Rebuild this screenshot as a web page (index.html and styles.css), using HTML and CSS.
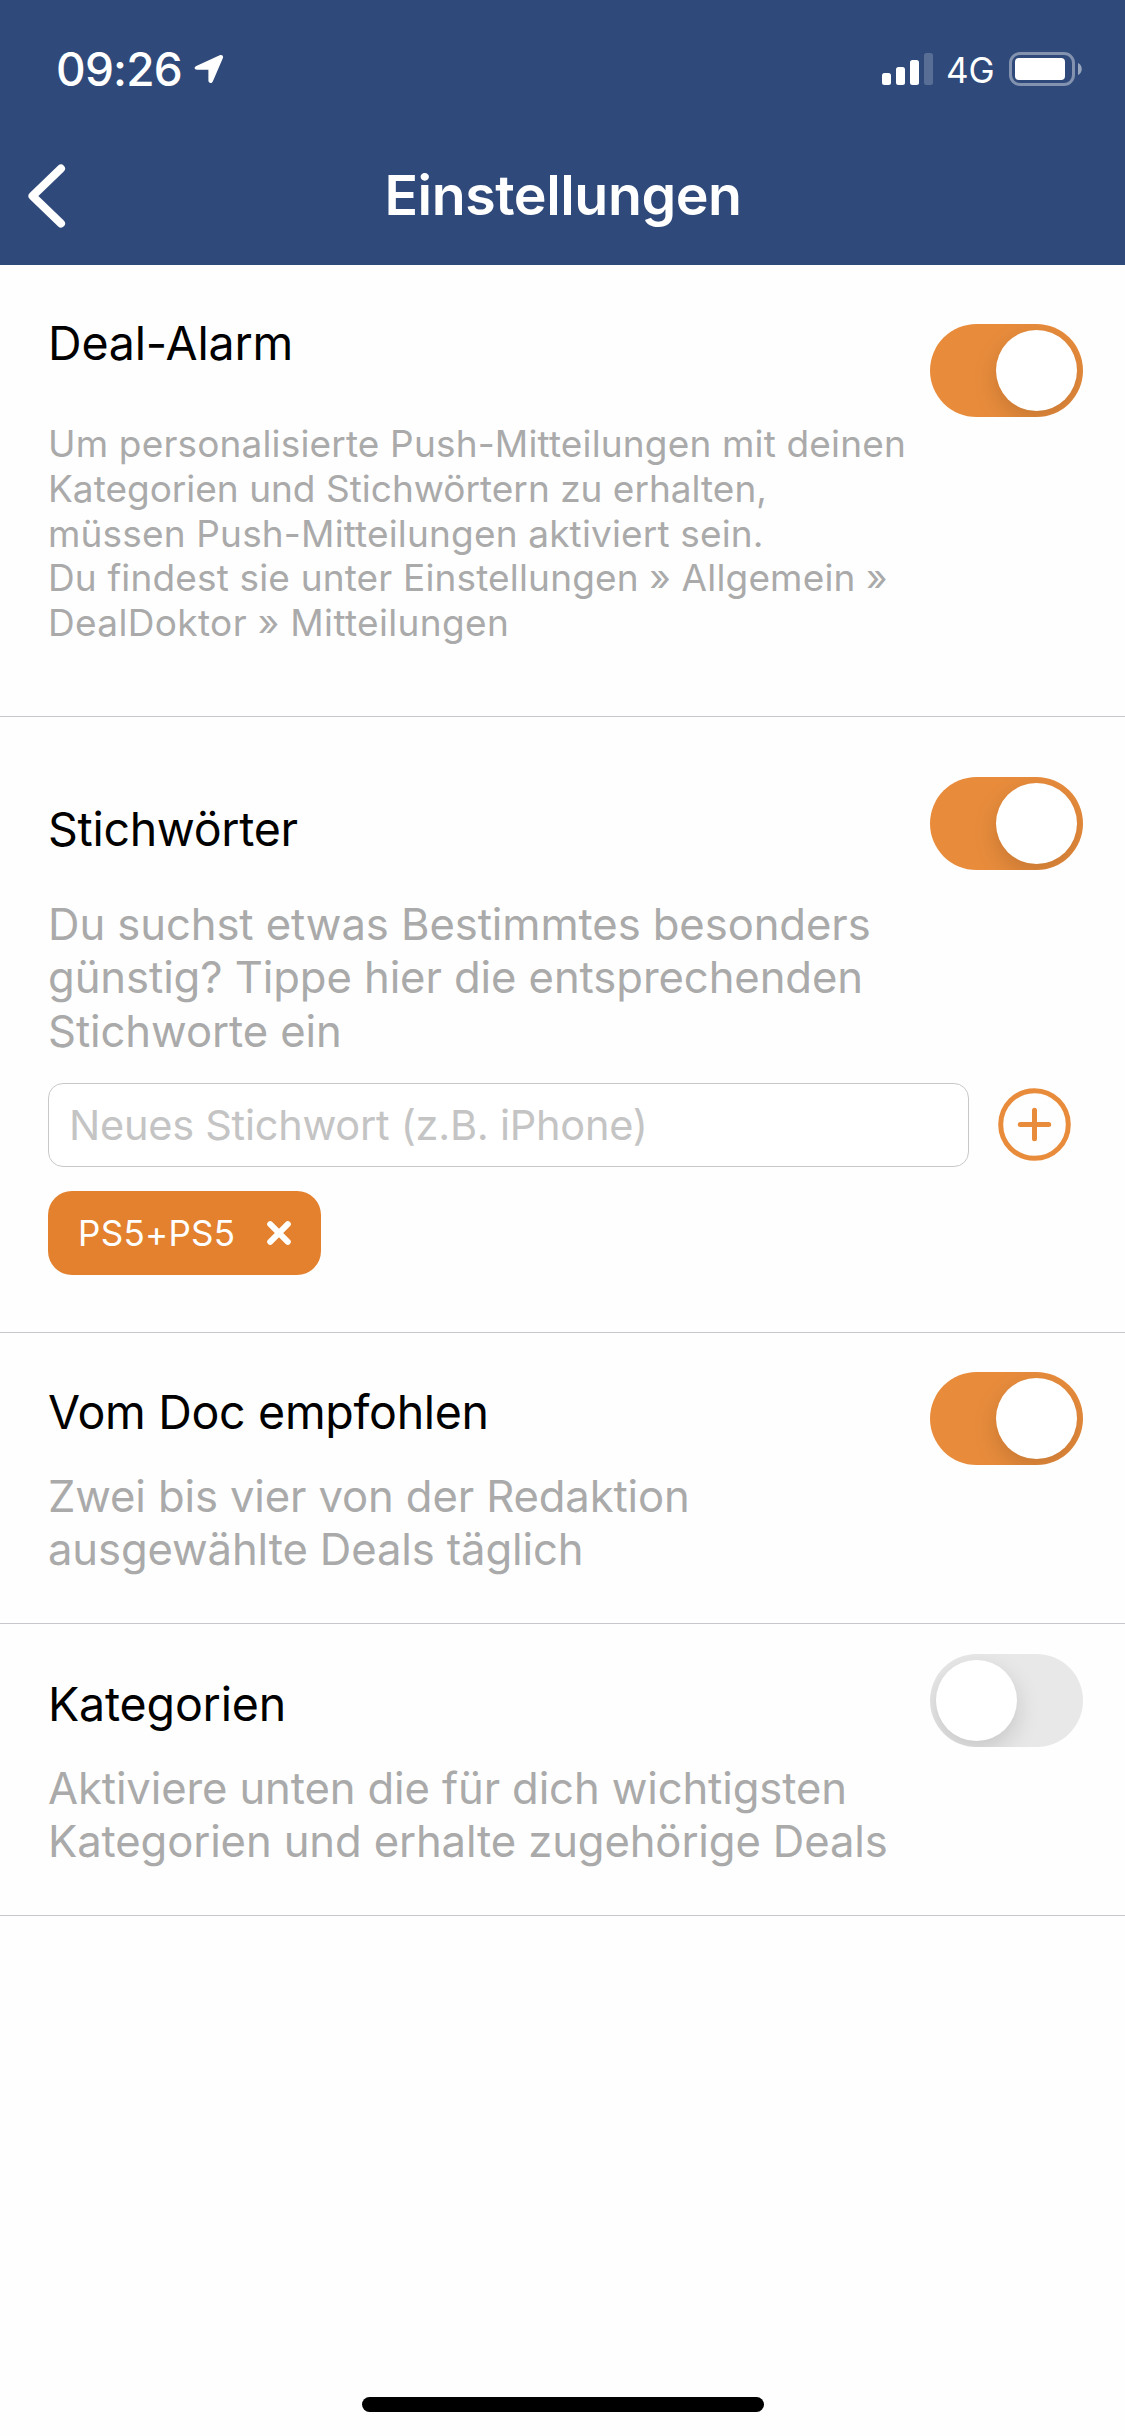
FILE: index.html
```
<!DOCTYPE html>
<html lang="de">
<head>
  <meta charset="utf-8">
  <title>Einstellungen</title>
  <link rel="stylesheet" href="styles.css">
</head>
<body>
  <header class="header">
    <div class="status">
      <span class="time">09:26</span>
      <svg class="location" viewBox="0 0 30 30" width="30" height="30"><path d="M2.300 12.100 25.700 1.200C28 0.200 29.800 2 28.800 4.300L18.900 27.200C17.800 30 14.400 29.400 14.400 26.600V15.700H3.100C0.300 15.700-0.300 13.300 2.300 12.100Z" fill="#fff"/></svg>
      <svg class="signal" viewBox="0 0 51 32" width="51" height="32" fill="#fff">
        <rect x="0" y="20" width="9" height="12" rx="2.500"/>
        <rect x="14" y="14" width="9" height="18" rx="2.500"/>
        <rect x="28" y="7" width="9" height="25" rx="2.500"/>
        <rect x="42" y="0" width="9" height="32" rx="2.500" opacity=".2"/>
      </svg>
      <span class="network">4G</span>
      <svg class="battery" viewBox="0 0 73 34" width="73" height="34">
        <rect x="1.500" y="1.500" width="63" height="31" rx="9.500" fill="none" stroke="#fff" stroke-width="3" opacity=".4"/>
        <rect x="6" y="6" width="50" height="22" rx="4" fill="#fff"/>
        <path d="M69 11c5 2 5 10 0 12z" fill="#fff" opacity=".5"/>
      </svg>
    </div>
    <div class="navbar">
      <svg class="back" viewBox="0 0 38 64" width="38" height="64"><path d="M33 4.500 4.500 32 33 59.500" fill="none" stroke="#fff" stroke-width="8" stroke-linecap="round" stroke-linejoin="round"/></svg>
      <h1 class="page-title">Einstellungen</h1>
    </div>
  </header>

  <main>
    <section class="setting setting-alarm">
      <div class="content">
        <h2 class="title">Deal-Alarm</h2>
        <p class="text text-small">Um personalisierte Push-Mitteilungen mit deinen<br><span class="tight">Kategorien und Stichwörtern zu erhalten,</span><br>müssen Push-Mitteilungen aktiviert sein.<br>Du findest sie unter Einstellungen » Allgemein »<br><span class="loose">DealDoktor » Mitteilungen</span></p>
      </div>
      <div class="toggle on"><div class="knob"></div></div>
    </section>

    <section class="setting setting-keywords">
      <div class="content">
        <h2 class="title title-keywords">Stichwörter</h2>
        <p class="text">Du suchst etwas Bestimmtes besonders<br>günstig? Tippe hier die entsprechenden<br>Stichworte ein</p>
      </div>
      <div class="toggle on"><div class="knob"></div></div>
      <div class="keyword-form">
        <input class="keyword-input" type="text" placeholder="Neues Stichwort (z.B. iPhone)">
        <svg class="add" viewBox="0 0 73 73" width="73" height="73" fill="none" stroke="#e88c3c" stroke-width="5"><circle cx="36.500" cy="36.500" r="33.800"/><path d="M36.500 22.300v28.400M22.300 36.500h28.400" stroke-linecap="round"/></svg>
      </div>
      <div class="tag">
        <span>PS5+PS5</span>
        <svg viewBox="0 0 24 24" width="24" height="24"><path d="M3.200 3.200 20.800 20.800M20.800 3.200 3.200 20.800" stroke="#fff" stroke-width="6" stroke-linecap="round"/></svg>
      </div>
    </section>

    <section class="setting setting-doc">
      <div class="content">
        <h2 class="title title-doc">Vom Doc empfohlen</h2>
        <p class="text">Zwei bis vier von der Redaktion<br>ausgewählte Deals täglich</p>
      </div>
      <div class="toggle on"><div class="knob"></div></div>
    </section>

    <section class="setting setting-categories">
      <div class="content">
        <h2 class="title">Kategorien</h2>
        <p class="text">Aktiviere unten die für dich wichtigsten<br>Kategorien und erhalte zugehörige Deals</p>
      </div>
      <div class="toggle"><div class="knob"></div></div>
    </section>
  </main>

  <footer class="footer"><div class="home-indicator"></div></footer>
</body>
</html>
```

FILE: styles.css
```
* {
  box-sizing: border-box;
}

body {
  margin: 0;
  min-height: 2436px;
  display: flex;
  flex-direction: column;
  background: #fefefe;
  font-family: Inter, "Liberation Sans", sans-serif;
  color: #000;
}

h1, h2, p {
  margin: 0;
  font-weight: 400;
}

svg {
  display: block;
  flex: none;
}

.header {
  height: 265px;
  background: #2f4a7a;
  color: #fff;
}

.status {
  height: 138px;
  padding: 0 43px 0 56px;
  display: flex;
  align-items: center;
}

.time {
  font-size: 46px;
  font-weight: 550;
  letter-spacing: -0.800px;
  width: 138px;
}

.signal {
  margin-left: auto;
}

.network {
  width: 63px;
  margin: 2px 0 0 13px;
  font-size: 35px;
  font-weight: 430;
}

.navbar {
  height: 116px;
  padding: 0 28px;
  display: grid;
  grid-template-columns: 38px 1fr 38px;
  align-items: center;
}

.page-title {
  padding: 0 0 3px 1px;
  text-align: center;
  font-size: 55.500px;
  font-weight: 600;
  letter-spacing: -0.450px;
}

.setting {
  display: grid;
  grid-template-columns: 1fr 153px;
  align-content: start;
  padding: 0 42px 0 48px;
  border-bottom: 1px solid #c8c7cc;
}

.title {
  font-size: 46.500px;
  line-height: 58px;
  letter-spacing: -0.170px;
}

.title-keywords {
  letter-spacing: -0.300px;
}

.title-doc {
  letter-spacing: -0.300px;
}

.text {
  font-size: 43.600px;
  line-height: 53.330px;
  letter-spacing: -0.120px;
  white-space: nowrap;
  color: #aaa;
}

.text-small {
  font-size: 37px;
  line-height: 44.750px;
  letter-spacing: 0.160px;
}

.tight {
  letter-spacing: 0;
}

.loose {
  letter-spacing: 0.350px;
}

.setting-alarm {
  height: 452px;
}

.setting-alarm .content {
  padding-top: 49px;
}

.setting-alarm .title {
  margin-bottom: 50px;
}

.setting-alarm .toggle {
  margin-top: 59px;
}

.setting-keywords {
  height: 616px;
}

.setting-keywords .content {
  padding-top: 83px;
}

.setting-keywords .title {
  margin-bottom: 40px;
}

.setting-keywords .text {
  letter-spacing: -0.080px;
}

.setting-keywords .toggle {
  margin-top: 60px;
}

.setting-doc {
  height: 291px;
}

.setting-doc .content {
  padding-top: 50px;
}

.setting-doc .title {
  margin-bottom: 29px;
}

.setting-doc .toggle {
  margin-top: 39px;
}

.setting-categories {
  height: 292px;
}

.setting-categories .content {
  padding-top: 51px;
}

.setting-categories .title {
  margin-bottom: 29px;
}

.setting-categories .toggle {
  margin-top: 30px;
}

.toggle {
  width: 153px;
  height: 93px;
  padding: 6px;
  display: flex;
  border-radius: 47px;
  background: #e8e8e8;
  overflow: hidden;
}

.toggle.on {
  justify-content: flex-end;
  background: #e88c3c;
}

.knob {
  width: 81px;
  height: 81px;
  border-radius: 50%;
  background: #fff;
  box-shadow: 0 9px 24px rgba(0, 0, 0, 0.15);
}

.keyword-form {
  grid-column: 1 / -1;
  margin-top: 25px;
  display: flex;
  align-items: center;
  gap: 29px;
}

.keyword-input {
  width: 921px;
  height: 84px;
  padding: 0 20px;
  border: 1px solid #c8c8c8;
  border-radius: 15px;
  background: #fff;
  font: 41.500px Inter, "Liberation Sans", sans-serif;
  letter-spacing: -0.260px;
}

.keyword-input::placeholder {
  color: #c4c4c4;
  opacity: 1;
}

.tag {
  width: 273px;
  height: 84px;
  margin-top: 24px;
  padding: 0 30px;
  display: flex;
  align-items: center;
  justify-content: space-between;
  border-radius: 24px;
  background: #e3812e;
  color: #fff;
  font-size: 35px;
  letter-spacing: 0.300px;
}

.footer {
  margin-top: auto;
  padding-bottom: 24px;
  display: flex;
  justify-content: center;
}

.home-indicator {
  width: 402px;
  height: 15px;
  border-radius: 8px;
  background: #000;
}
```
